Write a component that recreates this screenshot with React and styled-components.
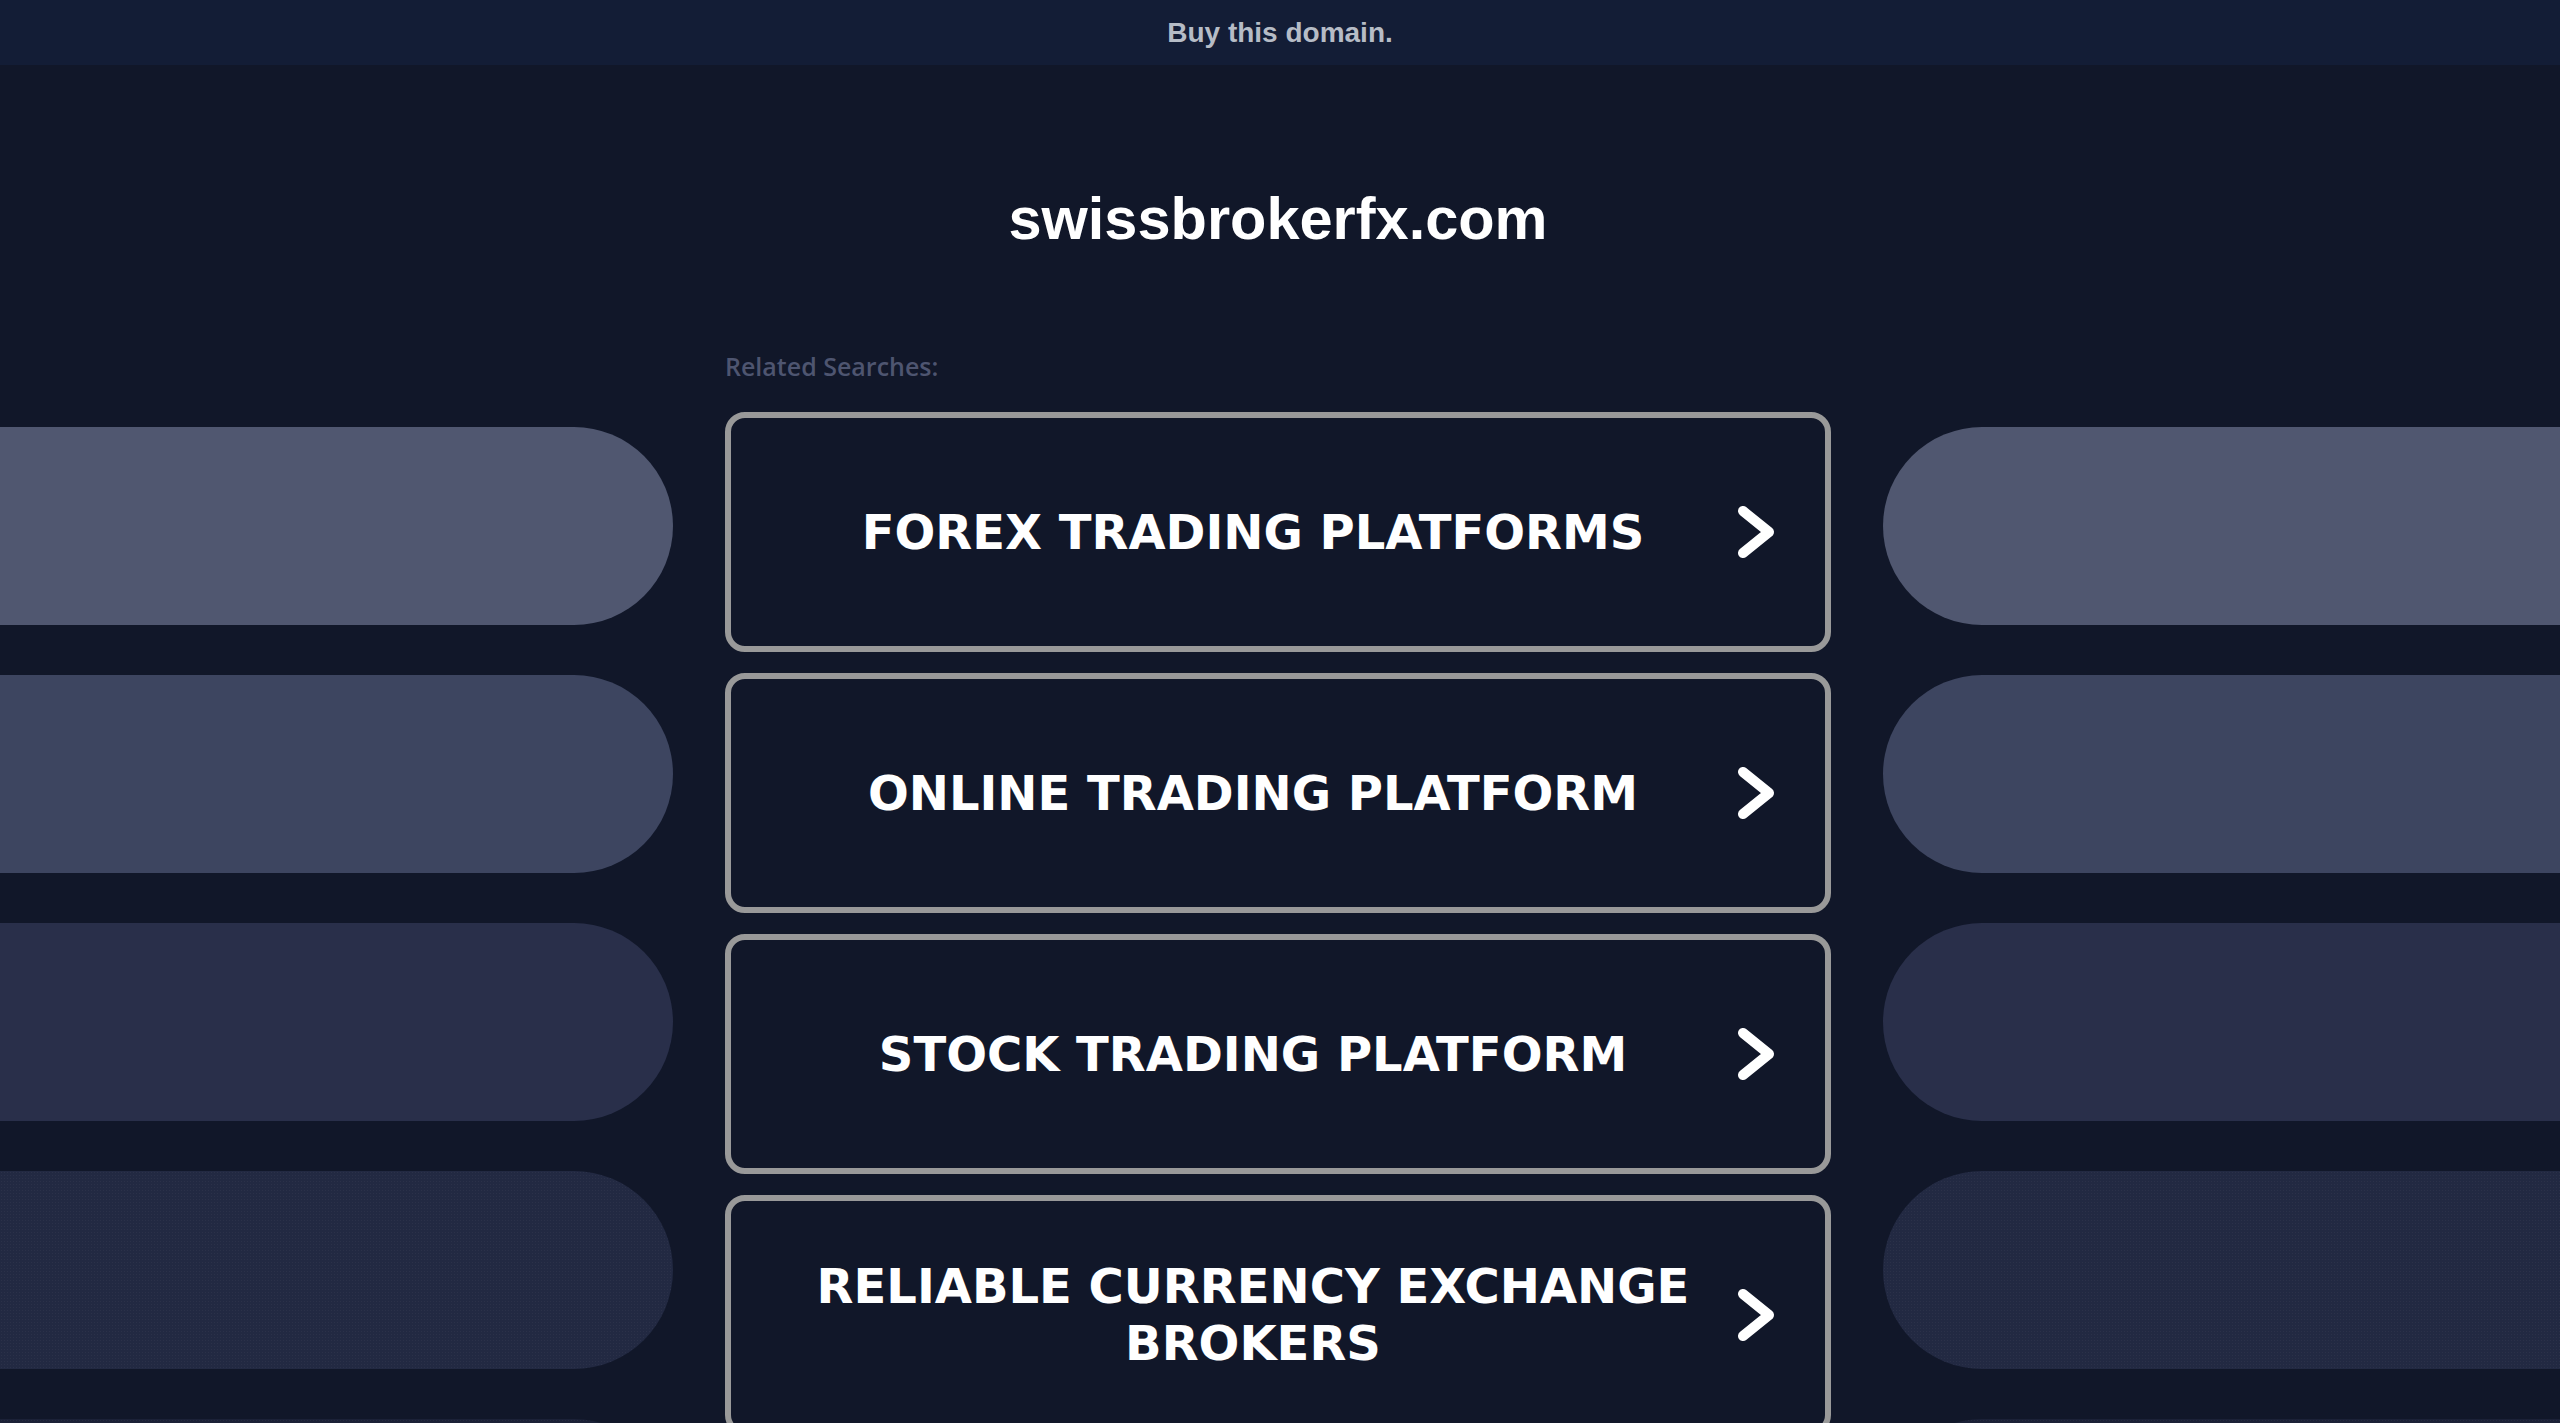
import styled, { createGlobalStyle } from 'styled-components'

const GlobalStyle = createGlobalStyle`
  html, body {
    margin: 0;
    padding: 0;
    background: #111729;
    overflow: hidden;
  }
  * {
    box-sizing: border-box;
  }
`

const Page = styled.div`
  min-height: 100vh;
  background: #111729;
  font-family: 'Liberation Sans', Arial, sans-serif;
`

const TopBar = styled.header`
  height: 65px;
  background: #131d36;
  display: flex;
  align-items: center;
  justify-content: center;
  font-size: 28px;
  font-weight: 700;
  color: #b6bcc6;
  cursor: pointer;
`

const Layout = styled.main`
  display: grid;
  grid-template-columns: 673px 1106px 1fr;
  column-gap: 52px;
`

const SideColumn = styled.aside`
  display: flex;
  flex-direction: column;
  gap: 50px;
  padding-top: 362px;
`

const Pill = styled.div`
  height: 198px;
  background-color: ${(p) => p.$tone};
  border-radius: ${(p) => (p.$side === 'left' ? '0 99px 99px 0' : '99px 0 0 99px')};
  ${(p) =>
    p.$textured &&
    `background-image: radial-gradient(rgba(255, 255, 255, 0.04) 1px, transparent 1px);
     background-size: 3px 3px;`}
`

const Center = styled.section`
  display: flex;
  flex-direction: column;
`

const Title = styled.h1`
  margin: 120px 0 0;
  text-align: center;
  font-size: 59.5px;
  line-height: 68px;
  font-weight: 700;
  color: #ffffff;
`

const RelatedLabel = styled.p`
  margin: 97px 0 0;
  font-family: 'Open Sans', 'Liberation Sans', sans-serif;
  font-weight: 600;
  font-size: 25px;
  line-height: 33px;
  color: #4e5570;
`

const LinkList = styled.ul`
  list-style: none;
  margin: 29px 0 0;
  padding: 0;
  display: flex;
  flex-direction: column;
  gap: 21px;
`

const LinkButton = styled.li`
  height: 240px;
  border: 6px solid #999999;
  border-radius: 20px;
  background: #111729;
  display: flex;
  align-items: center;
  gap: 47px;
  padding: 0 50px 0 85px;
  cursor: pointer;
`

const LinkText = styled.span`
  flex: 1;
  text-align: center;
  font-family: 'DejaVu Sans', Verdana, sans-serif;
  font-weight: 700;
  font-size: 48px;
  line-height: 57px;
  color: #ffffff;
  text-transform: uppercase;
`

const Chevron = () => (
  <svg width="38" height="52" viewBox="0 0 38 52" fill="none">
    <polyline
      points="6,5 32,26 6,47"
      stroke="#ffffff"
      strokeWidth="10"
      strokeLinecap="round"
      strokeLinejoin="round"
    />
  </svg>
)

const tones = [
  { color: '#505770' },
  { color: '#3d4560' },
  { color: '#292f4a' },
  { color: '#222942', textured: true },
  { color: '#1b2137', textured: true }
]

const searches = [
  'Forex Trading Platforms',
  'Online Trading Platform',
  'Stock Trading Platform',
  'Reliable Currency Exchange Brokers'
]

const Side = ({ side }) => (
  <SideColumn>
    {tones.map((t, i) => (
      <Pill key={i} $side={side} $tone={t.color} $textured={t.textured} />
    ))}
  </SideColumn>
)

const App = () => (
  <Page>
    <GlobalStyle />
    <TopBar>Buy this domain.</TopBar>
    <Layout>
      <Side side="left" />
      <Center>
        <Title>swissbrokerfx.com</Title>
        <RelatedLabel>Related Searches:</RelatedLabel>
        <LinkList>
          {searches.map((s) => (
            <LinkButton key={s}>
              <LinkText>{s}</LinkText>
              <Chevron />
            </LinkButton>
          ))}
        </LinkList>
      </Center>
      <Side side="right" />
    </Layout>
  </Page>
)

export default App
